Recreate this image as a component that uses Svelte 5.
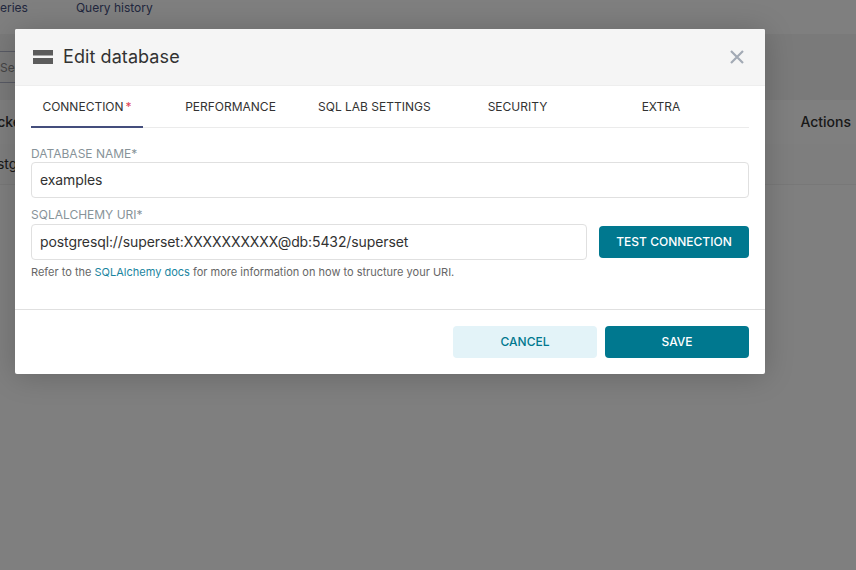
<script>
	const tabs = [
		{ label: 'CONNECTION', required: true, active: true },
		{ label: 'PERFORMANCE' },
		{ label: 'SQL LAB SETTINGS' },
		{ label: 'SECURITY' },
		{ label: 'EXTRA' }
	];
</script>

<div class="page">
	<nav class="subnav">
		<span class="nav-item">Saved queries</span>
		<span class="nav-item">Query history</span>
	</nav>
	<section class="filters">
		<div class="search">Search</div>
	</section>
	<div class="table-head">
		<span class="backend">Backend</span>
		<span class="actions">Actions</span>
	</div>
	<div class="table-row">postgresql</div>
</div>

<div class="overlay"></div>

<div class="modal">
	<header class="modal-header">
		<svg class="db-icon" viewBox="0 0 20 14" width="20" height="14" aria-hidden="true">
			<rect x="0" y="0" width="20" height="5.5" fill="#5c5c5c" />
			<rect x="0" y="8" width="20" height="6" fill="#5c5c5c" />
		</svg>
		<h4 class="title">Edit database</h4>
		<svg class="close" viewBox="0 0 16 16" width="16" height="16" aria-hidden="true">
			<path d="M2 2l12 12M14 2l-12 12" stroke="#a3aab5" stroke-width="2.2" fill="none" />
		</svg>
	</header>

	<div class="tabs">
		{#each tabs as tab}
			<div class="tab" class:active={tab.active}>
				{tab.label}{#if tab.required}<span class="req">*</span>{/if}
			</div>
		{/each}
	</div>

	<div class="body">
		<div class="field">
			<label class="label" for="db-name">DATABASE NAME*</label>
			<div class="input" id="db-name">examples</div>
		</div>
		<div class="field uri">
			<label class="label" for="db-uri">SQLALCHEMY URI*</label>
			<div class="uri-row">
				<div class="input grow" id="db-uri">postgresql://superset:XXXXXXXXXX@db:5432/superset</div>
				<button class="btn primary test">TEST CONNECTION</button>
			</div>
			<p class="help">Refer to the <span class="link">SQLAlchemy docs</span> for more information on how to structure your URI.</p>
		</div>
	</div>

	<footer class="footer">
		<button class="btn secondary">CANCEL</button>
		<button class="btn primary">SAVE</button>
	</footer>
</div>

<style>
	:global(body) {
		margin: 0;
		background: #fff;
		font-family: Inter, "Liberation Sans", sans-serif;
		overflow: hidden;
	}

	.page {
		width: 856px;
		height: 570px;
		overflow: hidden;
		background: #fff;
		color: #323232;
	}

	.subnav {
		height: 34px;
		margin-left: -53px;
		display: flex;
		gap: 48px;
		font-size: 12px;
		line-height: 15px;
		background: #fff;
		color: #444e7c;
	}

	.filters {
		height: 66px;
		background: #f4f4f4;
		padding-top: 17px;
		box-sizing: border-box;
	}

	.search {
		width: 200px;
		height: 32px;
		border: 1px solid #b0b5c8;
		border-width: 1px 0;
		font-size: 12px;
		line-height: 31px;
		color: #8a8a8a;
		box-sizing: border-box;
	}

	.table-head {
		height: 44px;
		display: flex;
		justify-content: space-between;
		font-size: 14px;
		font-weight: 500;
		line-height: 44px;
	}

	.backend {
		margin-left: -20px;
	}

	.actions {
		margin-right: 5px;
	}

	.table-row {
		height: 40px;
		margin-left: -20px;
		font-size: 14px;
		line-height: 40px;
		background: #fdfdfd;
		border-bottom: 1px solid #f0f0f0;
	}

	.overlay {
		position: absolute;
		inset: 0;
		background: rgba(0, 0, 0, 0.5);
	}

	.modal {
		position: absolute;
		left: 15px;
		top: 29px;
		width: 750px;
		height: 345px;
		display: flex;
		flex-direction: column;
		background: #fff;
		border-radius: 2px;
		box-shadow: 0 2px 30px rgba(0, 0, 0, 0.2);
		color: #323232;
	}

	.modal-header {
		height: 57px;
		flex: none;
		box-sizing: border-box;
		display: flex;
		align-items: center;
		padding: 0 20px 1px 18px;
		background: #f5f5f5;
		border-bottom: 1px solid #eeeeee;
		border-radius: 2px 2px 0 0;
	}

	.db-icon {
		flex: none;
	}

	.title {
		margin: 0 0 0 10px;
		flex: 1;
		font-size: 18px;
		font-weight: 400;
		line-height: 24px;
		letter-spacing: 0.08px;
		color: #323232;
	}

	.close {
		flex: none;
	}

	.tabs {
		flex: none;
		height: 42px;
		margin: 0 16px;
		box-sizing: border-box;
		display: grid;
		grid-template-columns: repeat(5, 112px);
		column-gap: 31.5px;
		border-bottom: 1px solid #ebebeb;
	}

	.tab {
		height: 42px;
		box-sizing: border-box;
		text-align: center;
		font-size: 12px;
		line-height: 42px;
		white-space: nowrap;
		color: #323232;
	}

	.tab.active {
		border-bottom: 2px solid #444e7c;
	}

	.req {
		color: #e04355;
		margin-left: 2px;
	}

	.body {
		flex: 1;
		padding: 18px 16px 0;
	}

	.label {
		display: block;
		font-size: 12px;
		line-height: 16px;
		color: #879399;
	}

	.input {
		height: 36px;
		box-sizing: border-box;
		padding: 0 8px;
		border: 1px solid #e0e0e0;
		border-radius: 4px;
		font-size: 14px;
		line-height: 34px;
		letter-spacing: -0.1px;
		color: #323232;
		background: #fff;
	}

	.uri {
		margin-top: 9px;
	}

	.uri-row {
		display: flex;
		align-items: center;
		gap: 12px;
		margin-top: 1px;
	}

	.grow {
		flex: 1;
	}

	.help {
		margin: 4px 0 0;
		font-size: 11px;
		line-height: 16px;
		color: #666;
	}

	.link {
		color: #1a85a0;
	}

	.btn {
		width: 144px;
		height: 32px;
		border: none;
		border-radius: 4px;
		font-family: inherit;
		font-size: 12px;
		font-weight: 500;
		padding: 0 0 1px;
	}

	.test {
		width: 150px;
		flex: none;
	}

	.primary {
		background: #00788f;
		color: #fff;
	}

	.secondary {
		background: #e3f3f8;
		color: #00788f;
	}

	.footer {
		flex: none;
		height: 65px;
		box-sizing: border-box;
		display: flex;
		justify-content: flex-end;
		gap: 8px;
		padding: 16px 16px 0;
		border-top: 1px solid #e0e0e0;
	}
</style>
